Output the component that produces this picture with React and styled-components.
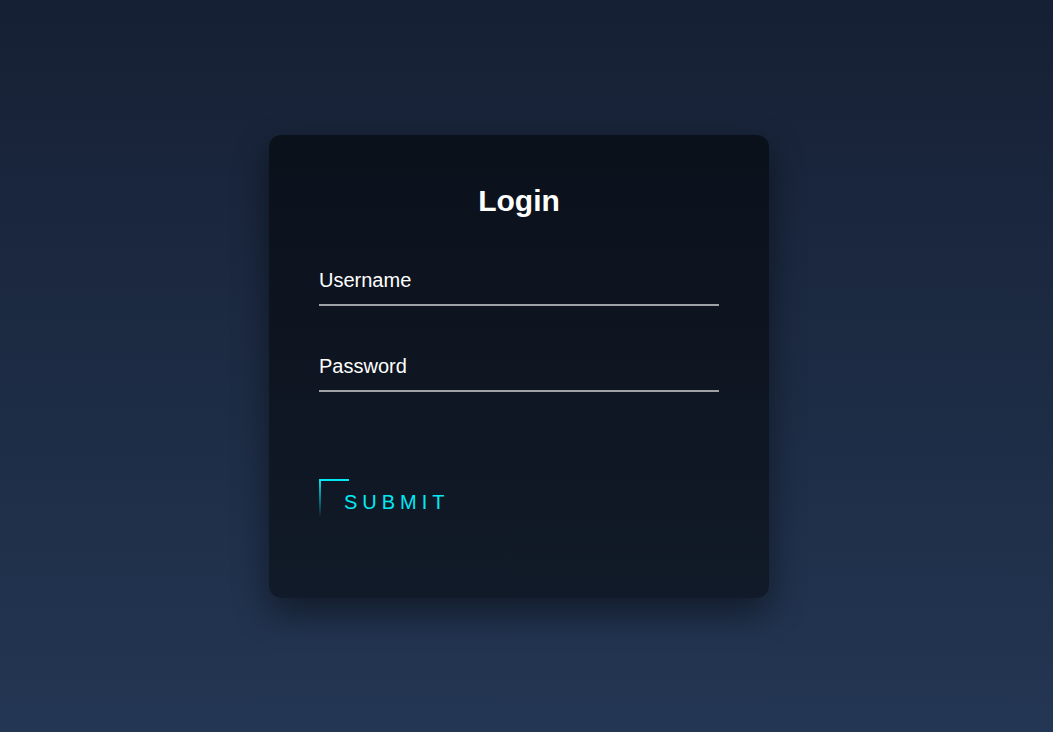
import React from 'react';
import styled, { createGlobalStyle } from 'styled-components';

const GlobalStyle = createGlobalStyle`
    html, body { margin: 0; padding: 0; }
    body {
        font-family: "Liberation Sans", Arial, sans-serif;
        background: linear-gradient(180deg, #162034 0%, #233653 100%);
        min-height: 100vh;
    }
`;

const Page = styled.div`
    min-height: 100vh;
    display: flex; align-items: center; justify-content: center;
    padding-right: 15px;
    box-sizing: border-box;
`;

const Card = styled.form`
    width: 500px;
    box-sizing: border-box;
    padding: 48px 50px 72px;
    background: linear-gradient(180deg, #0b111b 0%, #111a28 100%);
    border-radius: 12px;
    box-shadow: 0 15px 35px rgba(0, 0, 0, 0.45);
    display: flex; flex-direction: column;
`;

const Title = styled.h2`
    margin: 0 0 40px;
    font-size: 30px; line-height: 36px; font-weight: 700;
    color: #ffffff; text-align: center;
`;

const Field = styled.input`
    display: block; width: 100%;
    box-sizing: border-box;
    margin: 0 0 ${({ $gap }) => $gap}px;
    padding: 10px 0 12px;
    font-family: inherit; font-size: 20px; line-height: 23px;
    color: #ffffff;
    background: transparent;
    border: none;
    border-bottom: 2px solid rgba(255, 255, 255, 0.6);
    outline: none;
    &::placeholder { color: #ffffff; opacity: 1; }
`;

const Submit = styled.button`
    position: relative;
    align-self: flex-start;
    padding: 12px 24px 12px 25px;
    font-family: inherit; font-size: 20px; line-height: 23px;
    letter-spacing: 5px;
    color: #03e9f4;
    background: transparent;
    border: none;
    cursor: pointer;

    &::before {
        content: '';
        position: absolute; top: 0; left: 0;
        width: 30px; height: 2px;
        background: #03e9f4;
    }
    &::after {
        content: '';
        position: absolute; top: 0; left: 0;
        width: 2px; height: 38px;
        background: linear-gradient(180deg, #03e9f4, transparent);
    }
`;

export default function App() {
    return (
        <>
            <GlobalStyle />
            <Page>
                <Card onSubmit={(e) => e.preventDefault()}>
                    <Title>Login</Title>
                    <Field type="text" placeholder="Username" $gap={39} />
                    <Field type="password" placeholder="Password" $gap={87} />
                    <Submit type="submit">SUBMIT</Submit>
                </Card>
            </Page>
        </>
    );
}
